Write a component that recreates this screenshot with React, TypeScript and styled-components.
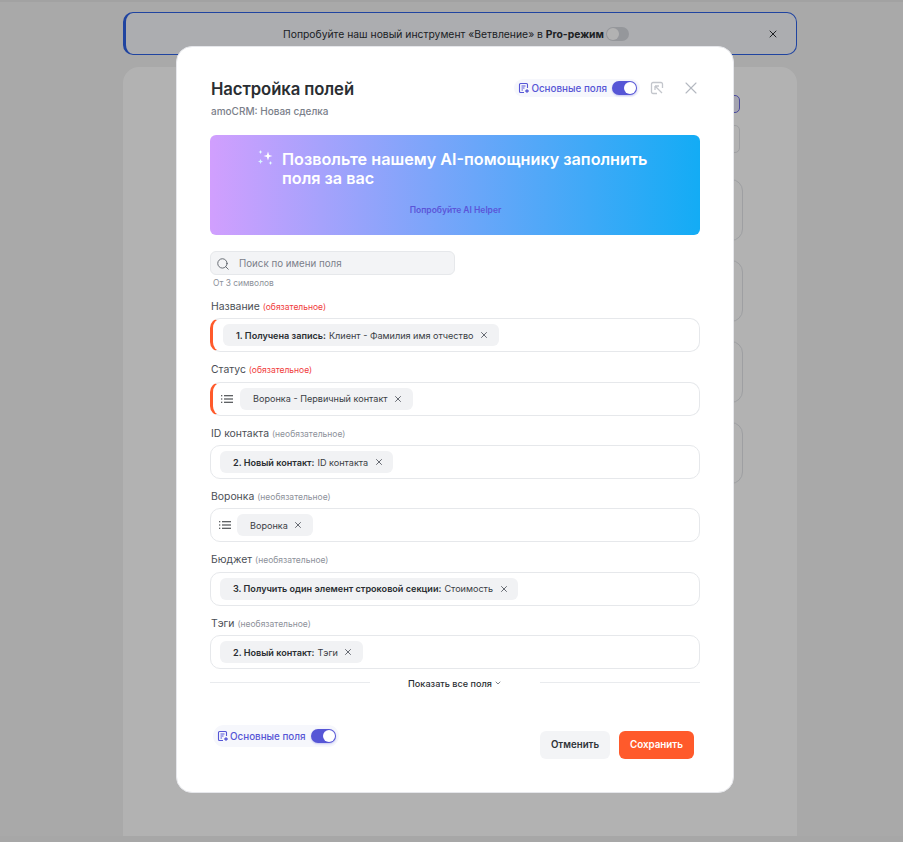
import * as React from "react";
import styled, { createGlobalStyle } from "styled-components";
import { ChevronDown, Search, X } from "lucide-react";

const GlobalStyle = createGlobalStyle`
    html, body {
        margin: 0;
        padding: 0;
        height: 100%;
        overflow: hidden;
        font-family: Inter, "Noto Sans", sans-serif;
    }
    * {
        box-sizing: border-box;
    }
`;

const Page = styled.div`
    position: relative;
    width: 903px;
    height: 842px;
    background: #f2f2f2;
    overflow: hidden;
`;

const TopStrip = styled.div`
    height: 2px;
    background: #e8e8e8;
`;

const PageBody = styled.div`
    width: 674px;
    margin-left: 123px;
    padding-top: 10px;
`;

const Banner = styled.div`
    height: 43px;
    display: flex;
    align-items: center;
    justify-content: center;
    position: relative;
    padding-right: 10px;
    background: #f6f8fd;
    border: 1px solid #2f62e6;
    border-left-width: 3px;
    border-radius: 10px;
    font-size: 10.35px;
    color: #2b2f33;
    gap: 2px;
`;

const BannerClose = styled(X)`
    position: absolute;
    right: 17px;
    top: 15px;
    color: #2b2f33;
`;

const GhostToggle = styled.span`
    width: 23px;
    height: 14px;
    border-radius: 7px;
    background: #d6d8de;
    display: flex;
    align-items: center;
    padding-left: 1px;
`;

const GhostKnob = styled.span`
    width: 12px;
    height: 12px;
    border-radius: 50%;
    background: #fff;
`;

const BackCard = styled.div`
    margin-top: 12px;
    height: 790px;
    background: #fff;
    border-radius: 16px;
    padding: 28px 54px 0 0;
    display: flex;
    flex-direction: column;
    align-items: flex-end;
`;

const BackChip = styled.div`
    width: 200px;
    height: 18px;
    border: 1px solid #6a6ae0;
    background: #ebebfb;
    border-radius: 5px;
    margin: 0 3px 12px 0;
`;

const BackInput = styled.div`
    width: 200px;
    height: 28px;
    border: 1px solid #e2e4e8;
    border-radius: 5px;
    margin: 0 3px 26px 0;
`;

const BackRow = styled.div`
    width: 200px;
    height: 62px;
    border: 1px solid #e2e4e8;
    border-radius: 12px;
    margin-bottom: 19px;
`;

const Footer = styled.div`
    position: absolute;
    left: 0;
    right: 0;
    bottom: 0;
    height: 6px;
    background: #f0f0f0;
`;

const Overlay = styled.div`
    position: absolute;
    inset: 0;
    background: rgba(0, 0, 0, 0.3);
    padding: 46px 0 0 176px;
`;

const Modal = styled.div`
    width: 558px;
    height: 747px;
    background: #fff;
    border: 1px solid #e6e7eb;
    border-radius: 16px;
    padding: 31px 33px 0 33px;
    display: flex;
    flex-direction: column;
`;

const Header = styled.div`
    display: flex;
    justify-content: space-between;
    align-items: flex-start;
    height: 57px;
`;

const TitleBlock = styled.div`
    display: flex;
    flex-direction: column;
    padding-left: 1px;
`;

const Title = styled.h2`
    margin: 0;
    font-size: 16.7px;
    line-height: 22px;
    font-weight: 600;
    color: #2a2e32;
    letter-spacing: -0.1px;
`;

const Subtitle = styled.div`
    margin-top: 4px;
    font-size: 10px;
    line-height: 14px;
    font-weight: 500;
    color: #7b808a;
`;

const HeaderTools = styled.div`
    display: flex;
    align-items: center;
    margin-top: 0;
    margin-right: -1px;
`;

const Pill = styled.div<{ $tall?: boolean }>`
    display: flex;
    align-items: center;
    height: ${(p) => (p.$tall ? "22px" : "18px")};
    padding: 0 3px 0 4px;
    gap: 1px;
    background: #f6f7fc;
    border-radius: 11px;
    font-size: 9.85px;
    font-weight: 500;
    color: #5656d6;
`;

const Toggle = styled.span`
    width: 25px;
    height: 14px;
    margin-left: 4px;
    border-radius: 7px;
    background: #5656d6;
    display: flex;
    justify-content: flex-end;
    align-items: center;
    padding-right: 1px;
    box-shadow: 0 1px 2px rgba(86, 86, 214, 0.3);
`;

const Knob = styled.span`
    width: 12px;
    height: 12px;
    border-radius: 50%;
    background: #fff;
`;

const ToolIcon = styled.svg`
    margin-left: 10px;
    color: #c3c6cc;
`;

const CloseButton = styled(X)`
    margin-left: 17px;
    color: #b4b8c0;
`;

const Promo = styled.div`
    height: 100px;
    border-radius: 6px;
    background: linear-gradient(90deg, #d19ffe 0%, #13acf5 100%);
    padding: 15px 46px 0 47px;
    display: flex;
    flex-direction: column;
`;

const PromoHead = styled.div`
    display: flex;
    gap: 8px;
`;

const SparkleIcon = styled.svg`
    flex: none;
    margin-top: -1px;
`;

const PromoText = styled.div`
    font-size: 16.2px;
    line-height: 19px;
    font-weight: 600;
    color: #fff;
`;

const PromoLink = styled.div`
    margin-top: 16px;
    text-align: center;
    font-size: 8.5px;
    line-height: 12px;
    font-weight: 600;
    color: #5b55d8;
`;

const SearchBox = styled.div`
    margin-top: 16px;
    width: 245px;
    height: 24px;
    display: flex;
    align-items: center;
    gap: 9px;
    padding: 1px 0 0 5px;
    background: #f3f4f6;
    border: 1px solid #e6e8eb;
    border-radius: 6px;
    font-size: 9.75px;
    color: #7b808a;
`;

const SearchIcon = styled(Search)`
    color: #555a62;
`;

const SearchHint = styled.div`
    margin: 2px 0 0 3px;
    height: 12px;
    font-size: 8.4px;
    line-height: 12px;
    color: #8d919a;
`;

const FieldList = styled.div`
    margin-top: 1.3px;
    display: flex;
    flex-direction: column;
`;

const Field = styled.div`
    height: 63.4px;
    display: flex;
    flex-direction: column;
`;

const FieldLabel = styled.div`
    height: 28px;
    padding: 8.6px 0 0 1px;
    font-size: 10.4px;
    line-height: 16px;
    color: #4a4e55;
    white-space: nowrap;
`;

const FieldHint = styled.span<{ $required?: boolean }>`
    margin-left: 3px;
    font-size: 8.5px;
    color: ${(p) => (p.$required ? "#f03b3b" : "#8d919a")};
`;

const FieldBox = styled.div<{ $required?: boolean; $select?: boolean }>`
    height: 34px;
    display: flex;
    align-items: center;
    gap: ${(p) => (p.$required ? "7px" : "6px")};
    padding-left: ${(p) => (p.$select ? "8px" : p.$required ? "10px" : "9px")};
    background: #fff;
    border: 1px solid #e6e8eb;
    border-radius: 10px;
    ${(p) => p.$required && "border-left: 3px solid #ff5a2b;"}
`;

const ListGlyph = styled.svg`
    color: #2a2e32;
    flex: none;
`;

const Chip = styled.div`
    height: 22px;
    display: flex;
    align-items: center;
    gap: 3px;
    padding: 0 9.5px 0 13px;
    background: #f1f2f4;
    border-radius: 6px;
    font-size: 9.1px;
    color: #3a3e44;
    white-space: nowrap;
`;

const ChipSource = styled.b`
    font-weight: 600;
    color: #2a2e32;
`;

const ChipClose = styled(X)`
    margin-left: 2.5px;
    color: #666a72;
`;

const ShowAll = styled.div`
    margin-top: 5px;
    display: flex;
    align-items: center;
    font-size: 9.1px;
    font-weight: 500;
    color: #2a2e32;
`;

const ShowAllLine = styled.span`
    flex: 1;
    height: 1px;
    background: #e9ebee;
`;

const ShowAllLabel = styled.span`
    width: 170px;
    padding-top: 2px;
    display: flex;
    align-items: center;
    justify-content: center;
    gap: 2px;
`;

const ShowAllChevron = styled(ChevronDown)`
    color: #666a72;
`;

const ModalFooter = styled.div`
    display: flex;
    justify-content: space-between;
    margin-top: 36px;
    padding: 0 6px 0 3px;
`;

const Actions = styled.div`
    display: flex;
    gap: 9px;
    margin-top: 6px;
`;

const CancelButton = styled.button`
    width: 70px;
    height: 28px;
    border: 0;
    border-radius: 6px;
    background: #f3f4f6;
    font: 600 9.7px Inter, sans-serif;
    color: #2f3338;
`;

const SaveButton = styled.button`
    width: 75px;
    height: 28px;
    border: 0;
    border-radius: 6px;
    background: #ff5a2b;
    font: 600 9.8px Inter, sans-serif;
    color: #fff;
`;

const FormIcon = () => (
    <svg width="12" height="12" viewBox="0 0 12 12" fill="none" stroke="currentColor" strokeWidth="1.1">
        <path d="M6 10.500H2.500a1 1 0 0 1-1-1v-7a1 1 0 0 1 1-1h6a1 1 0 0 1 1 1V6" />
        <path d="M3.500 4h4M3.500 6h3M3.500 8h1.500" />
        <path d="M9 7.200v3.600M7.200 9h3.600" strokeWidth="1.400" />
    </svg>
);

const Sparkles = () => (
    <SparkleIcon width="17" height="17" viewBox="0 0 17 17" fill="#fff">
        <path d="M11 2.500l1.100 3.400 3.400 1.100-3.400 1.100L11 11.500 9.900 8.100 6.500 7l3.400-1.100z" />
        <path d="M3.500 1l.6 1.400 1.400.6-1.400.6-.6 1.400-.6-1.400L1.500 3l1.400-.6z" fill="#e4fbff" />
        <path d="M3.500 10l.7 1.800 1.800.7-1.800.7-.7 1.800-.7-1.800-1.800-.7 1.800-.7z" fill="#d8f6ff" />
        <path d="M13.500 12l.6 1.400 1.400.6-1.400.6-.6 1.400-.6-1.400-1.400-.6 1.400-.6z" fill="#e4fbff" />
    </SparkleIcon>
);

const ListIcon = () => (
    <ListGlyph width="12" height="8" viewBox="0 0 12 8" fill="none" stroke="currentColor" strokeWidth="1.1">
        <path d="M3 .8h9M3 4h9M3 7.200h9" />
        <path d="M0 .8h1.300M0 4h1.300M0 7.200h1.300" />
    </ListGlyph>
);

type FieldData = {
    label: string;
    required?: boolean;
    select?: boolean;
    source?: string;
    value: string;
};

const fields: FieldData[] = [
    { label: "Название", required: true, source: "1. Получена запись:", value: "Клиент - Фамилия имя отчество" },
    { label: "Статус", required: true, select: true, value: "Воронка - Первичный контакт" },
    { label: "ID контакта", source: "2. Новый контакт:", value: "ID контакта" },
    { label: "Воронка", select: true, value: "Воронка" },
    { label: "Бюджет", source: "3. Получить один элемент строковой секции:", value: "Стоимость" },
    { label: "Тэги", source: "2. Новый контакт:", value: "Тэги" },
];

const MainFieldsToggle = ({ tall }: { tall?: boolean }) => (
    <Pill $tall={tall}>
        <FormIcon />
        Основные поля
        <Toggle>
            <Knob />
        </Toggle>
    </Pill>
);

export default function App() {
    return (
        <Page>
            <GlobalStyle />
            <TopStrip />
            <PageBody>
                <Banner>
                    <span>Попробуйте наш новый инструмент «Ветвление» в <b>Pro-режим</b></span>
                    <GhostToggle>
                        <GhostKnob />
                    </GhostToggle>
                    <BannerClose size={12} strokeWidth={2} />
                </Banner>
                <BackCard>
                    <BackChip />
                    <BackInput />
                    <BackRow />
                    <BackRow />
                    <BackRow />
                    <BackRow />
                </BackCard>
            </PageBody>
            <Footer />
            <Overlay>
                <Modal>
                    <Header>
                        <TitleBlock>
                            <Title>Настройка полей</Title>
                            <Subtitle>amoCRM: Новая сделка</Subtitle>
                        </TitleBlock>
                        <HeaderTools>
                            <MainFieldsToggle />
                            <ToolIcon width="14" height="14" viewBox="0 0 14 14" fill="none" stroke="currentColor" strokeWidth="1.3">
                                <path d="M7 12.500H3a1.500 1.500 0 0 1-1.500-1.500V3A1.500 1.500 0 0 1 3 1.500h8A1.500 1.500 0 0 1 12.500 3v4" />
                                <path d="M5 5h4M5 5v4M5 5l7 7" />
                            </ToolIcon>
                            <CloseButton size={20} strokeWidth={1.3} />
                        </HeaderTools>
                    </Header>
                    <Promo>
                        <PromoHead>
                            <Sparkles />
                            <PromoText>Позвольте нашему AI-помощнику заполнить поля за вас</PromoText>
                        </PromoHead>
                        <PromoLink>Попробуйте AI Helper</PromoLink>
                    </Promo>
                    <SearchBox>
                        <SearchIcon size={14} strokeWidth={1.5} />
                        Поиск по имени поля
                    </SearchBox>
                    <SearchHint>От 3 символов</SearchHint>
                    <FieldList>
                        {fields.map((field) => (
                            <Field key={field.label}>
                                <FieldLabel>
                                    {field.label}
                                    <FieldHint $required={field.required}>
                                        {field.required ? "(обязательное)" : "(необязательное)"}
                                    </FieldHint>
                                </FieldLabel>
                                <FieldBox $required={field.required} $select={field.select}>
                                    {field.select && <ListIcon />}
                                    <Chip>
                                        {field.source && <ChipSource>{field.source}</ChipSource>}
                                        {field.value}
                                        <ChipClose size={10} strokeWidth={2.4} />
                                    </Chip>
                                </FieldBox>
                            </Field>
                        ))}
                    </FieldList>
                    <ShowAll>
                        <ShowAllLine />
                        <ShowAllLabel>
                            Показать все поля
                            <ShowAllChevron size={8} strokeWidth={2.5} />
                        </ShowAllLabel>
                        <ShowAllLine />
                    </ShowAll>
                    <ModalFooter>
                        <MainFieldsToggle tall />
                        <Actions>
                            <CancelButton>Отменить</CancelButton>
                            <SaveButton>Сохранить</SaveButton>
                        </Actions>
                    </ModalFooter>
                </Modal>
            </Overlay>
        </Page>
    );
}
